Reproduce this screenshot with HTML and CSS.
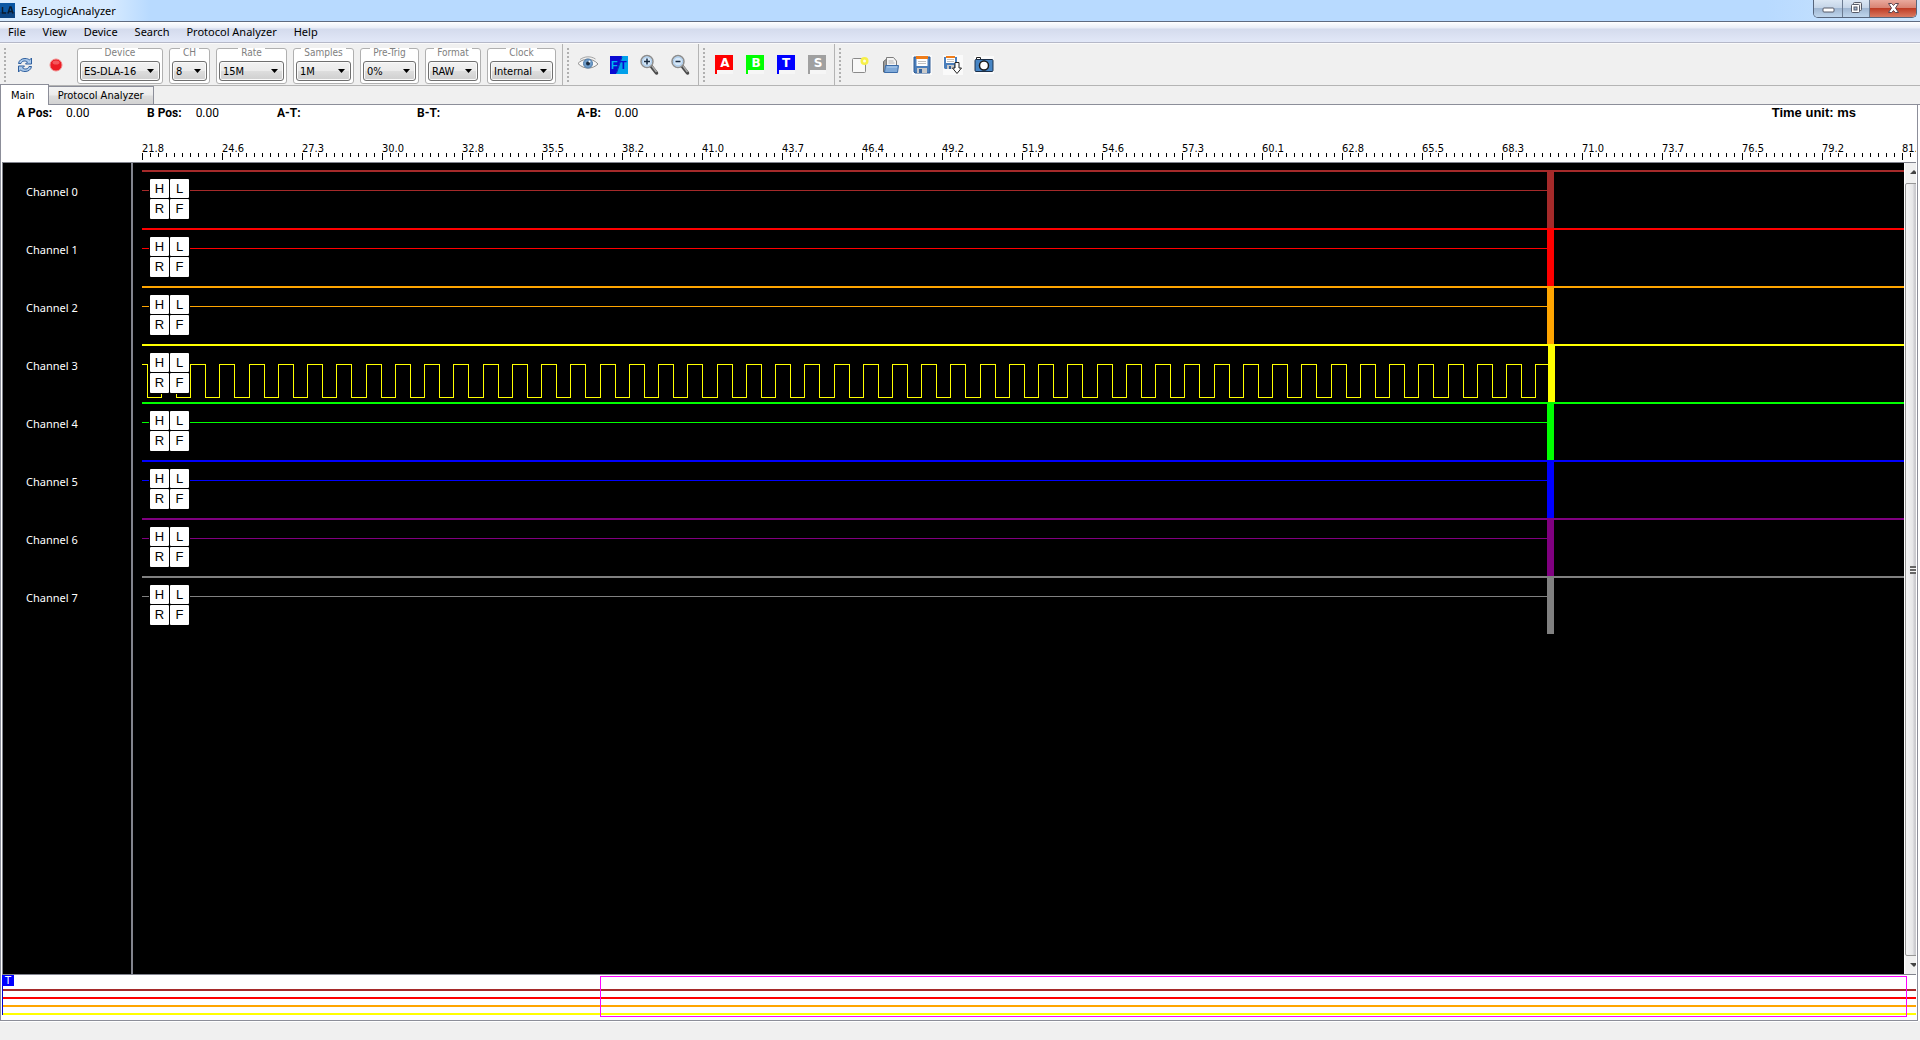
FILE: index.html
```html
<!DOCTYPE html>
<html lang="en">
<head>
    <meta charset="UTF-8">
    <meta name="viewport" content="width=device-width, initial-scale=1.0">
    <title>EasyLogicAnalyzer</title>
    <link rel="stylesheet" href="styles.css">
</head>
<body>

<header class="titlebar">
    <svg class="app-icon" width="15" height="15" viewBox="0 0 15 15">
        <rect width="15" height="15" fill="#0a57a4"/>
        <rect y="9" width="15" height="6" fill="#0d4583"/>
        <path d="M2.5 4v6H6M8 10.500l2-6.500h1l2 6.500M9 8.500h3" fill="none" stroke="#0b1c30" stroke-width="1.500"/>
    </svg>
    <span class="app-title">EasyLogicAnalyzer</span>
    <div class="window-buttons">
        <button class="win-btn win-min" aria-label="Minimize">
            <svg width="13" height="6" viewBox="0 0 13 6"><rect x="1" y="1" width="11" height="4" rx="1" fill="#fff" stroke="#565b68"/></svg>
        </button>
        <button class="win-btn win-max" aria-label="Restore">
            <svg width="13" height="13" viewBox="0 0 13 13">
                <rect x="3.500" y="1.500" width="8" height="8" rx="1" fill="#eee" stroke="#565b68"/>
                <rect x="1.500" y="3.500" width="8" height="8" rx="1" fill="#fff" stroke="#565b68"/>
                <rect x="4" y="6" width="3" height="3" fill="#9eb4cf" stroke="#565b68"/>
            </svg>
        </button>
        <button class="win-btn win-close" aria-label="Close">
            <svg width="13" height="12" viewBox="0 0 13 12">
                <path d="M1.500 1.500h3.200l1.800 2 1.800-2h3.200L8.500 6l3 4.500H8.300l-1.800-2-1.800 2H1.500l3-4.500z" fill="#fff" stroke="#5b4650"/>
            </svg>
        </button>
    </div>
</header>

<nav class="menubar">
    <button>File</button>
    <button>View</button>
    <button>Device</button>
    <button>Search</button>
    <button>Protocol Analyzer</button>
    <button>Help</button>
</nav>

<div class="toolbars">
    <div class="toolbar">
        <span class="handle"></span>
        <button class="tool" aria-label="Refresh">
            <svg width="18" height="18" viewBox="0 0 18 18">
                <path d="M2.500 7.500C3 4 6 2.500 9 2.500c2 0 3.500.5 4.500 1.500L15.500 2v6H9.500l2-2C9.500 4.500 6 4.500 5 7.500z" fill="#a9c8ea" stroke="#2f5f9e"/>
                <path d="M15.500 10.500c-.5 3.500-3.500 5-6.500 5-2 0-3.500-.5-4.500-1.500L2.500 16v-6h6l-2 2c2 1.500 5.500 1.500 6.500-1.500z" fill="#a9c8ea" stroke="#2f5f9e"/>
            </svg>
        </button>
        <button class="tool" aria-label="Record">
            <svg width="14" height="14" viewBox="0 0 14 14">
                <circle cx="7" cy="7" r="6" fill="#ec1c24" stroke="#f08a8a"/>
                <ellipse cx="7" cy="4.500" rx="3.500" ry="2" fill="#f4575c"/>
            </svg>
        </button>
        <div class="settings">
            <div class="setting">
                <label for="device">Device</label>
                <select id="device" class="w-device"><option>ES-DLA-16</option></select>
            </div>
            <div class="setting">
                <label for="ch">CH</label>
                <select id="ch" class="w-ch"><option>8</option></select>
            </div>
            <div class="setting">
                <label for="rate">Rate</label>
                <select id="rate" class="w-rate"><option>15M</option></select>
            </div>
            <div class="setting">
                <label for="samples">Samples</label>
                <select id="samples" class="w-samples"><option>1M</option></select>
            </div>
            <div class="setting">
                <label for="pretrig">Pre-Trig</label>
                <select id="pretrig" class="w-pretrig"><option>0%</option></select>
            </div>
            <div class="setting">
                <label for="format">Format</label>
                <select id="format" class="w-format"><option>RAW</option></select>
            </div>
            <div class="setting">
                <label for="clock">Clock</label>
                <select id="clock" class="w-clock"><option>Internal</option></select>
            </div>
        </div>
    </div>

    <div class="toolbar">
        <span class="handle"></span>
        <button class="tool" aria-label="Show all">
            <svg width="22" height="20" viewBox="0 0 22 20">
                <path d="M1 8.500C5 3.500 15 2 21 9c-5 5-14 6-20-.5z" fill="#f7f7f7" stroke="#8c8c8c"/>
                <path d="M3 4.500C8 1 14 1 18.500 4" fill="none" stroke="#a5a5a5"/>
                <circle cx="11" cy="8.500" r="4.500" fill="#6f9cc9" stroke="#4d7aa8"/>
                <circle cx="11" cy="8.500" r="2" fill="#1c2c40"/>
                <circle cx="12.500" cy="6.500" r="1" fill="#fff"/>
            </svg>
        </button>
        <button class="tool" aria-label="Frequency and time">
            <svg width="18" height="18" viewBox="0 0 18 18">
                <rect width="18" height="18" fill="#0a0ad2"/>
                <path d="M12 0h6v18H6z" fill="#00a0ea"/>
                <path d="M12 1 6.500 17" stroke="#0b2cb5"/>
                <text class="ft-f" x="1" y="13">F</text>
                <text class="ft-t" x="10" y="13">T</text>
            </svg>
        </button>
        <button class="tool" aria-label="Zoom in">
            <svg width="20" height="22" viewBox="0 0 20 22">
                <path d="M11 12 16.500 19" stroke="#4a4a4a" stroke-width="3.500" stroke-linecap="round"/>
                <path d="M12 12 16.500 18" stroke="#a8a8a8" stroke-width="1.500"/>
                <circle cx="7" cy="7.500" r="6" fill="#d7e8f8" stroke="#8d8d8d" stroke-width="1.500"/>
                <circle cx="7" cy="7.500" r="4.500" fill="none" stroke="#9fc4e8"/>
                <path d="M4 7.500h6M7 4.500v6" stroke="#16283e" stroke-width="1.500"/>
            </svg>
        </button>
        <button class="tool" aria-label="Zoom out">
            <svg width="20" height="22" viewBox="0 0 20 22">
                <path d="M11 12 16.500 19" stroke="#4a4a4a" stroke-width="3.500" stroke-linecap="round"/>
                <path d="M12 12 16.500 18" stroke="#a8a8a8" stroke-width="1.500"/>
                <circle cx="7" cy="7.500" r="6" fill="#d7e8f8" stroke="#8d8d8d" stroke-width="1.500"/>
                <circle cx="7" cy="7.500" r="4.500" fill="none" stroke="#9fc4e8"/>
                <path d="M4.500 7.500h5" stroke="#16283e" stroke-width="1.500"/>
            </svg>
        </button>
    </div>

    <div class="toolbar">
        <span class="handle"></span>
        <button class="tool" aria-label="Cursor A">
            <svg width="18" height="20" viewBox="0 0 18 20"><path d="M2 15h16v4H2z" fill="#f6f6f6"/><path d="M0 0h18v15H2v4H0z" fill="#f00"/><text class="flag" x="10" y="12">A</text></svg>
        </button>
        <button class="tool" aria-label="Cursor B">
            <svg width="18" height="20" viewBox="0 0 18 20"><path d="M2 15h16v4H2z" fill="#f6f6f6"/><path d="M0 0h18v15H2v4H0z" fill="#0f0"/><text class="flag" x="10" y="12">B</text></svg>
        </button>
        <button class="tool" aria-label="Trigger">
            <svg width="18" height="20" viewBox="0 0 18 20"><path d="M2 15h16v4H2z" fill="#f6f6f6"/><path d="M0 0h18v15H2v4H0z" fill="#00f"/><text class="flag" x="9" y="12">T</text></svg>
        </button>
        <button class="tool" aria-label="Stop">
            <svg width="18" height="20" viewBox="0 0 18 20"><path d="M2 15h16v4H2z" fill="#f6f6f6"/><path d="M0 0h18v15H2v4H0z" fill="#a0a0a0"/><text class="flag" x="10" y="12">S</text></svg>
        </button>
    </div>

    <div class="toolbar toolbar-last">
        <span class="handle"></span>
        <button class="tool" aria-label="New">
            <svg width="18" height="18" viewBox="0 0 18 18">
                <rect x="1.500" y="2.500" width="13" height="14" rx="1" fill="#f8f8f8" stroke="#8a8a8a"/>
                <circle cx="13.500" cy="5" r="4" fill="#f7f048"/>
                <circle cx="13.500" cy="5" r="1.500" fill="#fffde0"/>
            </svg>
        </button>
        <button class="tool" aria-label="Open">
            <svg width="18" height="18" viewBox="0 0 18 18">
                <path d="M1.500 16V5.500L4 3.500h3V16z" fill="#9a9a9a" stroke="#6d6d6d"/>
                <path d="M4.500 12V1.500h7L14.500 5v7z" fill="#f4f4f4" stroke="#7d7d7d"/>
                <path d="M6.500 5h5M6.500 7h6" stroke="#b5b5b5"/>
                <path d="M3.500 9.500h13l-1 7h-13z" fill="#7fa9d8" stroke="#3a6ba8"/>
                <path d="M5 11h10" stroke="#b3cfee"/>
            </svg>
        </button>
        <button class="tool" aria-label="Save">
            <svg width="20" height="20" viewBox="0 0 20 20">
                <rect width="20" height="20" fill="#fafafa"/>
                <path d="M2 2h16v16H3l-1-1z" fill="#4a7ebb" stroke="#2f5b94"/>
                <path d="M4.500 1.500h11V11h-11z" fill="#fff"/>
                <path d="M4 1h12v3H4z" fill="#ef7d1a"/>
                <path d="M6 6.500h8M6 8.500h8" stroke="#c0c0c0"/>
                <path d="M5 13h10v5H5z" fill="#c9c9c9"/>
                <path d="M7 14h3v4H7z" fill="#37639b"/>
            </svg>
        </button>
        <button class="tool" aria-label="Export">
            <svg width="20" height="20" viewBox="0 0 20 20">
                <rect width="20" height="20" fill="#fafafa"/>
                <path d="M1 2h13v12H2l-1-1z" fill="#4a7ebb"/>
                <path d="M3 1h9v7H3z" fill="#fff"/>
                <path d="M3 1h9v2H3z" fill="#ef7d1a"/>
                <path d="M4 4.500h7M4 6.500h7" stroke="#c0c0c0"/>
                <path d="M4 10h7v4H4z" fill="#c9c9c9"/>
                <path d="M6 11h2v3H6z" fill="#37639b"/>
                <path d="M12 7.500h4V13h2.500L14 18.500 9.500 13H12z" fill="#fff" stroke="#222"/>
            </svg>
        </button>
        <button class="tool" aria-label="Screenshot">
            <svg width="20" height="18" viewBox="0 0 20 18">
                <rect width="20" height="18" fill="#fafafa"/>
                <path d="M2.500 1.500h4V4h-4z" fill="#fff" stroke="#222"/>
                <rect x="1" y="3.500" width="18" height="12" rx="1" fill="#4785c4" stroke="#1b2f49"/>
                <circle cx="10" cy="9.500" r="4.500" fill="#fff" stroke="#1b1b1b" stroke-width="1.500"/>
            </svg>
        </button>
    </div>
</div>

<div class="tabs" role="tablist">
    <button class="tab tab-active" role="tab" aria-selected="true">Main</button>
    <button class="tab" role="tab" aria-selected="false">Protocol Analyzer</button>
</div>

<main class="pane">
    <div class="readout">
        <div class="pos pos-a"><b>A Pos:</b><span>0.00</span></div>
        <div class="pos pos-b"><b>B Pos:</b><span>0.00</span></div>
        <div class="pos pos-at"><b>A-T:</b></div>
        <div class="pos pos-bt"><b>B-T:</b></div>
        <div class="pos"><b>A-B:</b><span>0.00</span></div>
        <b class="time-unit">Time unit: ms</b>
    </div>

    <div class="ruler" id="ruler"></div>

    <div class="scope">
        <div class="names" id="names"></div>
        <div class="traces" id="traces"></div>
        <div class="scroll-clip">
            <div class="scrollbar">
                <button class="arrow" aria-label="Scroll up"><svg width="8" height="4" viewBox="0 0 8 4"><path d="M0 4l4-4 4 4z" fill="#444"/></svg></button>
                <div class="thumb"><span class="grip"></span></div>
                <button class="arrow" aria-label="Scroll down"><svg width="8" height="4" viewBox="0 0 8 4"><path d="M0 0l4 4 4-4z" fill="#444"/></svg></button>
            </div>
        </div>
    </div>

    <div class="overview">
        <span class="mini mini-0"></span>
        <span class="mini mini-1"></span>
        <span class="mini mini-2"></span>
        <span class="mini mini-3"></span>
        <span class="trigger">T</span>
        <span class="viewport"></span>
    </div>
</main>

<footer class="statusbar"></footer>

<script>
    const colors = ['brown', 'red', 'orange', 'yellow', 'lime', 'blue', 'purple', 'gray'];
    const ticks = ['21.8', '24.6', '27.3', '30.0', '32.8', '35.5', '38.2', '41.0', '43.7', '46.4', '49.2', '51.9',
        '54.6', '57.3', '60.1', '62.8', '65.5', '68.3', '71.0', '73.7', '76.5', '79.2', '81.'];
    const END = 1405;       // x where the captured data stops
    const PERIOD = 29.24;   // clock period on channel 3

    document.getElementById('ruler').innerHTML = ticks.map(t => `<span>${t}</span>`).join('');

    function clockPath() {
        let d = 'M0 20.5H5.5V53.5';
        for (let x = 19; x < END; x += PERIOD) {
            const up = Math.round(x) + 0.5;
            const down = Math.min(up + 15, END + 1);
            d += `H${up}V20.5H${down}`;
            if (down < END) d += 'V53.5';
        }
        return d;
    }

    document.getElementById('names').innerHTML = colors.map((c, i) => `<div class="name">Channel ${i}</div>`).join('');

    document.getElementById('traces').innerHTML = colors.map((c, i) => {
        const clock = i === 3;
        const d = clock ? clockPath() : `M0 20.5H${END}`;
        return `<div class="trace">
            <svg class="wave" width="100%" height="58" color="${c}">
                <rect width="100%" height="2" fill="currentColor"/>
                <path d="${d}" fill="none" stroke="currentColor"/>
                <rect x="${clock ? END + 1 : END}" width="7" height="58" fill="currentColor"/>
            </svg>
            <div class="triggers">
                <button>H</button><button>L</button><button>R</button><button>F</button>
            </div>
        </div>`;
    }).join('');
</script>

</body>
</html>
```

FILE: styles.css
```css
* {
    box-sizing: border-box;
}
body {
    margin: 0;
    height: 100vh;
    display: flex;
    flex-direction: column;
    overflow: hidden;
    background: #f0f0f0;
    color: #000;
    font: 11px "DejaVu Sans Condensed", "DejaVu Sans", sans-serif;
}
button, select {
    font: inherit;
    color: inherit;
    margin: 0;
    padding: 0;
    border: none;
    background: none;
}

/* title bar */
.titlebar {
    display: flex;
    align-items: center;
    height: 22px;
    flex: none;
    background: linear-gradient(90deg, #d9ecff 0, #d6eaff 110px, #b8daff 150px, #b8daff 92%, #cfe6fd 100%);
    border-bottom: 1px solid #5f6b80;
}
.app-icon {
    display: block;
}
.app-title {
    margin-left: 6px;
    font: 11px "Noto Sans", sans-serif;
}
.window-buttons {
    display: flex;
    align-self: flex-start;
    margin: 0 3px 0 auto;
    height: 18px;
    border: 1px solid #56657c;
    border-top: none;
    border-radius: 0 0 5px 5px;
    overflow: hidden;
}
.win-btn {
    display: flex;
    align-items: center;
    justify-content: center;
    padding-bottom: 2px;
    background: linear-gradient(#dbe7f4 0, #c5d5e8 45%, #a0b7d2 50%, #bfd5ec 100%);
}
.win-min {
    width: 29px;
    border-right: 1px solid #6c7c92;
    padding-top: 4px;
}
.win-max {
    width: 27px;
    border-right: 1px solid #6c7c92;
}
.win-close {
    width: 46px;
    background: linear-gradient(#e9a99d 0, #d98474 45%, #bf3d26 50%, #d97a62 100%);
}

/* menu */
.menubar {
    display: flex;
    align-items: center;
    gap: 17px;
    flex: none;
    height: 21px;
    padding: 0 0 2px 8px;
    background: linear-gradient(#fff 0, #e9edf7 30%, #d4dbed 35%, #e2e8f8 100%);
    border-bottom: 1px solid #b5b8c8;
    font: 11px "Noto Sans", sans-serif;
}

/* toolbars */
.toolbars {
    display: flex;
    flex: none;
    height: 43px;
    border-bottom: 1px solid #b4b4b4;
    border-top: 1px solid #fafafa;
}
.toolbar {
    display: flex;
    align-items: center;
    padding-right: 2px;
    border-right: 1px solid #b4b4b4;
}
.toolbar-last {
    border-right: none;
}
.handle {
    width: 2px;
    height: 34px;
    margin: 0 3px 0 4px;
    background: repeating-linear-gradient(#b0b0b0 0, #b0b0b0 2px, transparent 2px, transparent 4px);
}
.tool {
    display: flex;
    align-items: center;
    justify-content: center;
    width: 31px;
    height: 31px;
}
.ft-f, .ft-t {
    font: bold 11px "Liberation Sans", sans-serif;
    fill: #00b4f0;
}
.ft-t {
    fill: #0a0ad2;
}
.flag {
    font: bold 12px "DejaVu Sans", sans-serif;
    fill: #fff;
    text-anchor: middle;
}
.settings {
    display: flex;
    gap: 6px;
    margin: 0 4px 0 6px;
}
.setting {
    display: flex;
    flex-direction: column;
    align-items: center;
    height: 36px;
    margin-top: 3px;
    padding: 0 2px;
    background: #fff;
    border: 1px solid #b0b0b0;
    border-radius: 3px;
}
.setting label {
    margin: -1px 0 4px;
    padding: 0 3px;
    line-height: 9px;
    background: #fff;
    color: #808080;
    font-size: 10px;
}
.setting select {
    appearance: none;
    height: 20px;
    padding-left: 3px;
    border: 1px solid #707070;
    border-radius: 3px;
    box-shadow: inset 0 0 0 1px #fafafa;
    background: url("data:image/svg+xml,%3Csvg xmlns='http://www.w3.org/2000/svg' width='7' height='4'%3E%3Cpath d='M0 0h7L3.500 4z'/%3E%3C/svg%3E") no-repeat right 5px center, linear-gradient(#f2f2f2 0, #ebebeb 48%, #dddddd 52%, #cfcfcf 100%);
}
.w-device { width: 80px; }
.w-ch { width: 35px; }
.w-rate { width: 65px; }
.w-samples { width: 55px; }
.w-pretrig { width: 53px; }
.w-format { width: 50px; }
.w-clock { width: 63px; }

/* tabs */
.tabs {
    display: flex;
    align-items: flex-end;
    flex: none;
    height: 20px;
    margin-top: -1px;
    box-shadow: inset 0 -1px #8c8e99;
}
.tab {
    height: 19px;
    padding: 0 9px;
    border: 1px solid #8c8e99;
    border-left: none;
    background: linear-gradient(#f3f3f3 0, #ebebeb 48%, #dddddd 52%, #d2d2d2 100%);
}
.tab-active {
    height: 21px;
    padding: 0 13px 0 10px;
    border-left: 1px solid #8c8e99;
    border-bottom: none;
    background: #fff;
}

/* main pane */
.pane {
    display: flex;
    flex-direction: column;
    flex: 1;
    min-height: 0;
    margin-right: 2px;
    padding: 0 1px;
    background: #fff;
    border: 1px solid #8c8e99;
    border-top: none;
    box-shadow: 0 1px #fff, 2px 0 #fff;
}
.readout {
    display: flex;
    flex: none;
    padding: 0 60px 0 15px;
    font: 12px/16px Roboto, "Liberation Sans", sans-serif;
}
.pos {
    display: flex;
    gap: 14px;
}
.pos-a, .pos-b { width: 130px; }
.pos-at { width: 140px; }
.pos-bt { width: 160px; }
.time-unit {
    margin-left: auto;
    font: bold 13px/16px "Liberation Sans", sans-serif;
}

/* ruler: a short tick every 8px, a long one every 80px */
.ruler {
    display: flex;
    flex: none;
    height: 41px;
    margin-left: 140px;
    padding-top: 20px;
    line-height: 16px;
    overflow: hidden;
    background:
        repeating-linear-gradient(90deg, #000 0, #000 1px, transparent 1px, transparent 80px) 0 32px / 100% 7px no-repeat,
        repeating-linear-gradient(90deg, #000 0, #000 1px, transparent 1px, transparent 8px) 0 32px / 100% 4px no-repeat;
}
.ruler span {
    flex: 0 0 80px;
}

/* channels */
.scope {
    display: flex;
    flex: 1;
    min-height: 0;
    border: 1px solid #82848e;
    border-right: none;
}
.names {
    width: 130px;
    padding-top: 7px;
    background: #000;
    border-right: 2px solid #82848e;
    color: #fff;
    font: 11px "Noto Sans", sans-serif;
}
.name {
    height: 58px;
    padding-left: 23px;
    line-height: 44px;
}
.traces {
    flex: 1;
    min-width: 0;
    padding: 7px 0 0 9px;
    background: #000;
}
.trace {
    position: relative;
    height: 58px;
}
.wave {
    display: block;
    shape-rendering: crispEdges;
}
.triggers {
    position: absolute;
    left: 7px;
    top: 8px;
    display: grid;
    grid-template: 19px 20px / 19px 19px;
    gap: 1px;
    padding: 1px;
    background: #000;
}
.triggers button {
    background: #fff;
    border-radius: 1px;
    font: 13px/20px "Liberation Sans", sans-serif;
}

/* scrollbar runs under the right edge of the pane */
.scroll-clip {
    display: flex;
    width: 12px;
    padding-left: 1px;
    overflow: hidden;
}
.scrollbar {
    display: flex;
    flex-direction: column;
    flex: 0 0 17px;
    background: #f0f0f0;
}
.arrow {
    display: flex;
    align-items: center;
    justify-content: center;
    height: 18px;
}
.thumb {
    display: flex;
    flex: 1;
    align-items: center;
    justify-content: center;
    margin: 2px 0 0;
    border: 1px solid #979797;
    border-radius: 2px;
    background: linear-gradient(90deg, #f5f5f5 0, #e6e6e8 45%, #cfcfd3 55%, #c0c0c4 100%);
}
.grip {
    width: 8px;
    height: 8px;
    background: repeating-linear-gradient(#666 0, #666 2px, #f4f4f4 2px, #f4f4f4 3px);
}

/* overview strip */
.overview {
    position: relative;
    display: flex;
    flex-direction: column;
    gap: 6px;
    flex: none;
    height: 45px;
    padding: 14px 0 0 1px;
}
.mini {
    height: 2px;
}
.mini-0 { background: brown; }
.mini-1 { background: red; }
.mini-2 { background: orange; }
.mini-3 { background: yellow; }
.trigger {
    position: absolute;
    left: 0;
    top: 0;
    width: 12px;
    height: 11px;
    background: #00f;
    color: #fff;
    line-height: 11px;
    text-align: center;
}
.trigger::after {
    content: "";
    position: absolute;
    left: 0;
    top: 11px;
    width: 1px;
    height: 29px;
    background: #00c;
}
.viewport {
    position: absolute;
    left: 598px;
    right: 9px;
    top: 1px;
    height: 41px;
    border: 1px solid #f0f;
}

.statusbar {
    flex: none;
    height: 19px;
}
```
